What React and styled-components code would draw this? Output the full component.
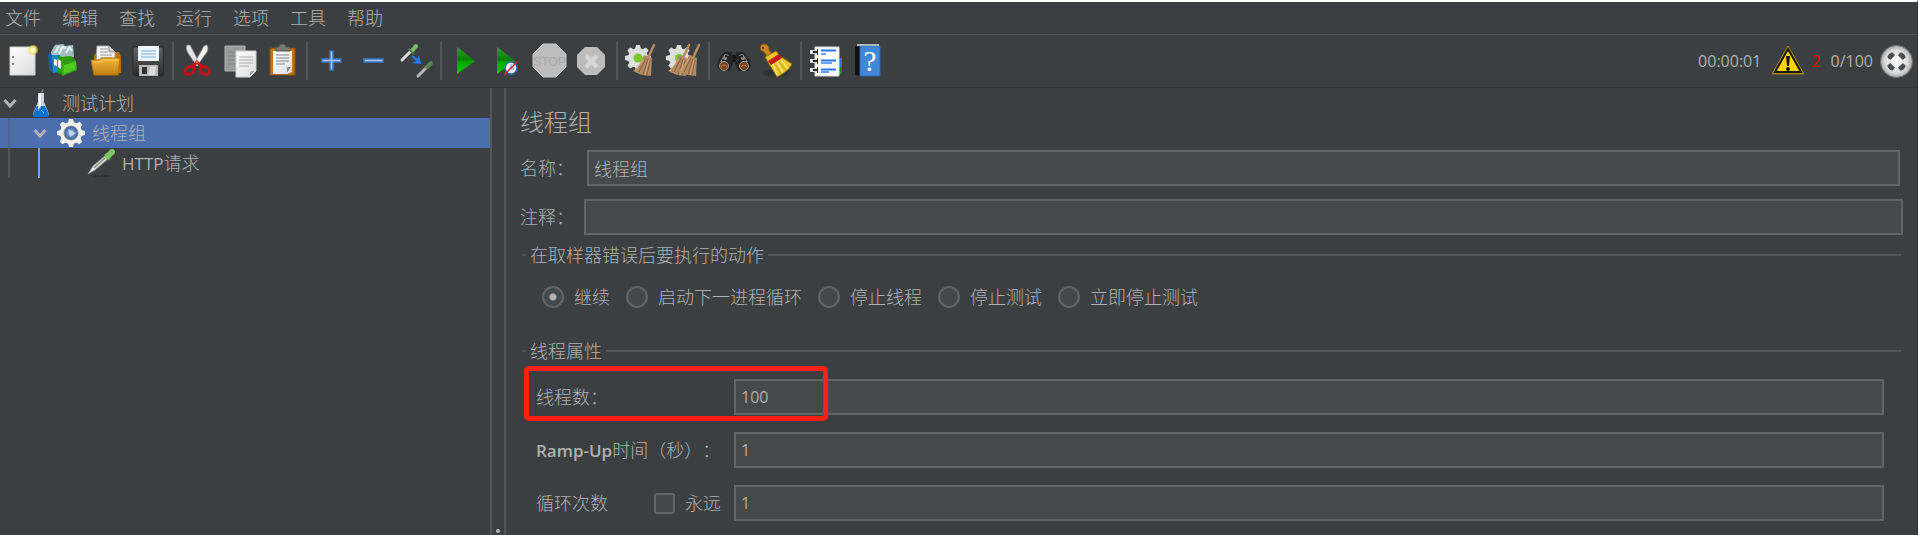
import React from "react";
import styled, { createGlobalStyle } from "styled-components";

const c = {
  bg: "#3c3f41",
  field: "#45494a",
  border: "#646464",
  line: "#555555",
  text: "#b0b0b0",
  select: "#4b6eaf",
};

const GlobalStyle = createGlobalStyle`
  *, *::before, *::after { box-sizing: border-box; }
  body {
    margin: 0;
    background: ${c.bg};
    color: ${c.text};
    font-family: "Open Sans", "Noto Sans CJK SC", sans-serif;
    font-size: 18px;
    font-weight: 300;
    line-height: 24px;
    text-spacing-trim: space-all;
  }
  button, input { font: inherit; color: inherit; }
`;

const Window = styled.div`
  display: flex;
  flex-direction: column;
  height: 100vh;
  overflow: hidden;
  border-top: 2px solid #ffffff;
  border-right: 1px solid #2d2f30;
`;

const MenuBar = styled.nav`
  display: flex;
  flex: none;
  gap: 21px;
  height: 33px;
  padding: 4px 5px;
  border-bottom: 1px solid ${c.line};
`;

const MenuButton = styled.button`
  padding: 0;
  border: 0;
  background: none;
  white-space: nowrap;
`;

const ToolBar = styled.header`
  display: flex;
  flex: none;
  align-items: center;
  height: 53px;
  padding: 0 4px 0 1px;
  border-bottom: 1px solid #323537;
`;

const ToolButton = styled.button`
  display: grid;
  place-items: center;
  flex: none;
  width: 42px;
  height: 42px;
  padding: 0;
  border: 0;
  background: none;
`;

const Separator = styled.span`
  flex: none;
  width: 2px;
  height: 38px;
  margin: 0 3px;
  background: ${c.line};
`;

const Status = styled.div`
  display: flex;
  align-items: center;
  gap: 10px;
  margin-left: auto;
  font-size: 16px;
  font-weight: 400;
`;

const ErrorGroup = styled.span`
  display: flex;
  align-items: center;
  gap: 6px;
  color: #e00000;
`;

const ThreadGroup = styled.span`
  display: flex;
  align-items: center;
  gap: 7px;
`;

const Body = styled.div`
  display: flex;
  flex: 1;
  min-height: 0;
`;

const Tree = styled.aside`
  flex: none;
  width: 490px;
`;

const TreeRow = styled.div`
  display: flex;
  height: 30px;
  line-height: 30px;
  background: ${(p) => (p.$selected ? c.select : "transparent")};
`;

const Guide = styled.span`
  width: 30px;
  background: linear-gradient(${(p) => p.$color}, ${(p) => p.$color}) 8px 0 / 2px 100% no-repeat;
`;

const Toggle = styled.span`
  display: grid;
  place-items: center;
  width: 20px;
`;

const NodeIcon = styled.span`
  display: grid;
  place-items: center;
  width: 42px;
`;

const Latin = styled.span`
  font-size: 17px;
  font-weight: ${(p) => (p.$bold ? 600 : 400)};
`;

const Divider = styled.div`
  display: flex;
  flex: none;
  align-items: flex-end;
  justify-content: center;
  width: 16px;
  border: solid ${c.line};
  border-width: 0 2px;
`;

const Grip = styled.span`
  width: 4px;
  height: 4px;
  margin-bottom: 2px;
  border-radius: 2px;
  background: #b8b8b8;
`;

const Main = styled.main`
  flex: 1;
  min-width: 0;
  padding: 18px 14px 0 14px;
`;

const Title = styled.h1`
  margin: 0 0 12px;
  font-size: 24px;
  font-weight: 300;
  line-height: 32px;
`;

const HeadRow = styled.div`
  display: flex;
  align-items: center;
  gap: 10px;
  margin-bottom: ${(p) => (p.$inset ? 13 : 8)}px;
  padding: ${(p) => (p.$inset ? "0 3px 0 0" : "0")};

  label { flex: none; width: ${(p) => (p.$inset ? 57 : 54)}px; }
`;

const TextInput = styled.input`
  flex: 1;
  min-width: 0;
  width: 100%;
  height: 36px;
  padding: 0 5px;
  border: 2px solid ${c.border};
  border-radius: 0;
  outline: 0;
  background: ${c.field};
  font-weight: ${(p) => (p.$numeric ? 400 : 300)};
  font-size: ${(p) => (p.$numeric ? 16 : 18)}px;
`;

const Group = styled.fieldset`
  min-width: 0;
  margin: 0 2px;
  padding: 0;
  border: 0;
  border-top: 2px solid ${c.line};
`;

const Legend = styled.legend`
  margin-left: 4px;
  padding: 0 4px;
`;

const Radios = styled.div`
  display: flex;
  gap: 16px;
  padding: 18px 20px 30px;
`;

const Choice = styled.label`
  display: flex;
  align-items: center;
  gap: 10px;
  white-space: nowrap;
`;

const Radio = styled.input`
  appearance: none;
  width: 22px;
  height: 22px;
  margin: 0;
  border: 2px solid ${c.border};
  border-radius: 50%;
  background: #43494a;
  &:checked { background: radial-gradient(circle, #b4b4b4 3px, #43494a 4px); }
`;

const Check = styled.input`
  appearance: none;
  width: 21px;
  height: 21px;
  margin: 0;
  border: 2px solid ${c.border};
  border-radius: 3px;
  background: #43494a;
`;

const Properties = styled.div`
  display: flex;
  flex-direction: column;
  gap: 17px;
  padding: 16px 17px 0 14px;
`;

const PropertyRow = styled.div`
  position: relative;
  display: grid;
  grid-template-columns: 198px 1fr;
  align-items: center;
`;

const PropertyLabel = styled.div`
  display: flex;
  justify-content: space-between;
  padding-right: 13px;
  white-space: nowrap;
`;

const Highlight = styled.span`
  position: absolute;
  inset: -13px auto -6px -12px;
  width: 304px;
  border: 5px solid #ff2012;
  border-radius: 5px;
  pointer-events: none;
`;

const Svg = ({ size = 36, box = 36, children }) => (
  <svg width={size} height={size} viewBox={`0 0 ${box} ${box}`} aria-hidden="true">{children}</svg>
);

const GradientSvg = styled.svg`
  position: absolute;
`;

const Gradients = () => (
  <GradientSvg width="0" height="0" aria-hidden="true">
    <defs>
      <linearGradient id="paper" x1="0" y1="0" x2="1" y2="1"><stop stopColor="#fff" /><stop offset="1" stopColor="#dcdcdc" /></linearGradient>
      <linearGradient id="gold" x1="0" y1="0" x2="0" y2="1"><stop stopColor="#f0b838" /><stop offset="1" stopColor="#c08010" /></linearGradient>
      <linearGradient id="green" x1="0" y1="0" x2="0" y2="1"><stop stopColor="#34a034" /><stop offset=".48" stopColor="#087e08" /><stop offset=".55" stopColor="#00a800" /><stop offset="1" stopColor="#12c512" /></linearGradient>
      <linearGradient id="steel" x1="0" y1="0" x2="0" y2="1"><stop stopColor="#666" /><stop offset="1" stopColor="#2a2a2a" /></linearGradient>
      <radialGradient id="silver"><stop stopColor="#fff" /><stop offset=".7" stopColor="#dcdcdc" /><stop offset="1" stopColor="#a8a8a8" /></radialGradient>
      <radialGradient id="glow"><stop stopColor="#fffef0" /><stop offset=".45" stopColor="#fdf5a0" /><stop offset="1" stopColor="#e8d838" stopOpacity=".5" /></radialGradient>
      <radialGradient id="blue"><stop stopColor="#a9c6e6" /><stop offset="1" stopColor="#2c5794" /></radialGradient>
    </defs>
  </GradientSvg>
);

const NewIcon = () => (
  <Svg>
    <path d="M6 4h25v28H6z" fill="url(#paper)" stroke="#d0d0c8" />
    <path d="M9 13v2M9 20v2" stroke="#888" strokeWidth="2" />
    <circle cx="29" cy="7" r="5" fill="url(#glow)" />
  </Svg>
);

const TemplatesIcon = () => (
  <Svg>
    <path d="M5 9l4-7 8-1 2 2 8-1 1 12-22 3z" fill="#a3bdc5" />
    <path d="M9 10l4-7M13 11l4-8M20 10l4-7M16 4l4 1M24 5l2 3" stroke="#e8f3f6" strokeWidth="2" fill="none" />
    <path d="M2 10l4 2 1 18-4-3z" fill="#0b62a6" />
    <path d="M6 12l8 0 0 17-7 1z" fill="#168bdc" />
    <path d="M8 16l3 1v6l-3-1z" fill="#f3faff" />
    <path d="M11 12l5 2v18l-4-2z" fill="#239c15" />
    <path d="M16 14l9-1 5 5 1 9-15 6z" fill="#38b015" />
    <path d="M12 16l3 2v8l-3-2z" fill="#f0ffe9" />
    <path d="M18 22l12-3-1 7-11 5z" fill="#52cc22" />
    <path d="M16 14l9-1 5 5-12 4z" fill="#2d9813" />
  </Svg>
);

const OpenIcon = () => (
  <Svg>
    <path d="M6 12l3-3h22l2 5v16H7z" fill="#b97505" />
    <path d="M9 3l12 0 6 6v12H8z" fill="#f3f3f3" stroke="#aaa" />
    <path d="M21 3v6h6" fill="#ccc" stroke="#999" />
    <path d="M12 6h8M12 9h8M12 12h12M12 15h12" stroke="#999" />
    <path d="M3 17h8l3-2h18l-2 17H6z" fill="url(#gold)" stroke="#b47007" />
    <path d="M5 19h7l3-2h15" stroke="#f8ce5c" fill="none" />
  </Svg>
);

const SaveIcon = () => (
  <Svg>
    <path d="M3 4h30l1 27-2 2H5l-2-2z" fill="url(#steel)" stroke="#292929" />
    <path d="M8 3h21v15H8z" fill="#edf6fd" />
    <path d="M11 8h15M11 11h15M11 14h15" stroke="#77acd8" />
    <path d="M9 22h19v11H9z" fill="#b8b8b8" />
    <path d="M12 24h5v7h-5z" fill="#333" />
    <path d="M20 24l6-1-1 9h-7z" fill="#ddd" />
  </Svg>
);

const CutIcon = () => (
  <Svg>
    <path d="M7 2c-2 4 1 8 3 11l7 10 3-2L10 2z" fill="#e4e5e1" stroke="#8b8b87" strokeWidth=".7" />
    <path d="M27 2c2 4 0 8-3 11l-7 10-3-2L24 3z" fill="#f4f4f2" stroke="#92928e" strokeWidth=".7" />
    <g fill="none" stroke="#ca0c12" strokeWidth="3">
      <ellipse cx="9.5" cy="27.500" rx="3.500" ry="5" transform="rotate(55 9.5 27.5)" />
      <ellipse cx="24.5" cy="27.500" rx="3.500" ry="5" transform="rotate(-55 24.5 27.5)" />
      <path d="M12 24l5-5 5 5" />
    </g>
    <circle cx="17" cy="19" r="1.5" fill="#f55" />
  </Svg>
);

const CopyIcon = () => (
  <Svg>
    <path d="M3 3h20v25H3z" fill="#9a9c9c" stroke="#b0b0b0" />
    <path d="M6 9h14M6 13h14M6 17h14M6 21h10" stroke="#808080" />
    <path d="M14 8h20v20l-6 6H14z" fill="url(#paper)" stroke="#d0d0d0" />
    <path d="M17 14h14M17 17h14M17 20h14M17 23h10" stroke="#aaa" />
    <path d="M34 27l-7 7 1-6z" fill="#999" stroke="#eee" />
  </Svg>
);

const PasteIcon = () => (
  <Svg>
    <path d="M6 5h25v27H6z" fill="#bc7517" stroke="#83500f" />
    <path d="M9 8h19v21l-5 2H9z" fill="url(#paper)" />
    <path d="M12 12h13M12 15h13M12 18h13M12 21h9" stroke="#888" />
    <path d="M28 23l-5 8-1-7z" fill="#888" stroke="#eee" />
    <path d="M12 4h3c0-4 7-4 7 0h4v4H12z" fill="#777b70" stroke="#51554d" />
  </Svg>
);

const PlusIcon = () => (
  <Svg>
    <path d="M16 8h3v8h8v3h-8v8h-3v-8h-8v-3h8z" fill="#a6c6ea" stroke="#3a79c4" strokeWidth="1.500" />
  </Svg>
);

const MinusIcon = () => (
  <Svg><path d="M8 16h19v3h-19z" fill="#a6c6ea" stroke="#3a79c4" strokeWidth="1.500" /></Svg>
);

const SwapIcon = () => (
  <Svg>
    <g strokeLinecap="round">
      <path d="M4 17L14 7" stroke="#dedbd8" strokeWidth="3" />
      <path d="M14 8l4-5" stroke="#80bc64" strokeWidth="4" />
      <path d="M11 6l5 5" stroke="#517642" strokeWidth="1.500" />
      <path d="M20 33l9-9" stroke="#b7b7b7" strokeWidth="3" />
      <path d="M29 24l4-4" stroke="#57864b" strokeWidth="4" />
    </g>
    <path d="M14 13l5 4" stroke="#2e7df0" strokeWidth="2" />
    <path d="M21 12l2 9-9-1 4-2z" fill="#2679f5" />
  </Svg>
);

const PlayIcon = () => (
  <Svg><path d="M9 4l18 14L9 31z" fill="url(#green)" /></Svg>
);

const PlayNoTimersIcon = () => (
  <Svg>
    <path d="M7 4l18 14L7 31z" fill="url(#green)" />
    <circle cx="21" cy="25" r="6" fill="#e9f0f8" stroke="#2c6db5" strokeWidth="1.500" />
    <path d="M21 21v5h3" stroke="#6aa0d0" fill="none" />
    <path d="M14 32l14-14" stroke="#d92020" strokeWidth="1.500" />
  </Svg>
);

const StopIcon = () => (
  <Svg>
    <path d="M11 1h13l10 10v13L24 34H11L1 24V11z" fill="#bdbdbd" stroke="#c8c8c8" />
    <text x="17.500" y="23" textAnchor="middle" fontFamily="Liberation Sans" fontWeight="400" fontSize="12" fill="#aaaaaa">STOP</text>
  </Svg>
);

const ShutdownIcon = () => (
  <Svg>
    <path d="M11 4h12l8 8v12l-8 8H11l-8-8V12z" fill="#bdbdbd" />
    <path d="M12 13l11 11M23 13L12 24" stroke="#d8d8d8" strokeWidth="4" />
  </Svg>
);

const gearTeeth = [0, 45, 90, 135, 180, 225, 270, 315];

const Gear = ({ cx, cy, r, fill = "#dededc" }) => (
  <g transform={`translate(${cx} ${cy})`} fill={fill}>
    <circle r={r - 3} />
    {gearTeeth.map((a) => (
      <path key={a} d={`M-3 ${4 - r}L-2 ${-r}H2L3 ${4 - r}z`} transform={`rotate(${a})`} />
    ))}
  </g>
);

const Broom = ({ x = 0 }) => (
  <g transform={`translate(${x} 0)`}>
    <path d="M30 2l-6 13" stroke="#b58a62" strokeWidth="2.500" strokeLinecap="round" />
    <path d="M20 12l8 3-1 18-9-1-9-4c7-5 8-10 11-16z" fill="#b48b61" />
    <path d="M22 15l-7 14M24 16l-5 16M26 17l-3 15" stroke="#775235" strokeWidth=".8" />
    <path d="M20 16l-9 12M25 17l-4 15" stroke="#dbb88c" strokeWidth=".7" />
  </g>
);

const ClearIcon = () => (
  <Svg><Gear cx={14} cy={15} r={13} /><circle cx="14" cy="15" r="4.500" fill="#77ca28" /><Broom /></Svg>
);

const ClearAllIcon = () => (
  <Svg><Gear cx={13} cy={15} r={13} /><circle cx="13" cy="15" r="4" fill="#77ca28" /><Broom x={-7} /><Broom x={3} /></Svg>
);

const SearchIcon = () => (
  <Svg>
    <path d="M13 12h9v7h-9z" fill="#151515" />
    <path d="M8 9h8l1 12-3 7H4l-3-5 2-7z" fill="#242424" />
    <path d="M20 9h8l5 7 2 7-3 5H22l-3-7z" fill="#242424" />
    <path d="M9 11l4 1-4 7-5 0zM23 12l4-1 5 8-5 0z" fill="#8e9090" />
    <path d="M9 13l4 1M6 17l4 1M23 14l4-1M26 18l4-1" stroke="#222" strokeWidth="2" />
    <g fill="#7a4020" stroke="#9c9c9c"><circle cx="8" cy="23" r="4.500" /><circle cx="28" cy="23" r="4.500" /></g>
    <path d="M5 24q3-4 6 0M25 24q3-4 6 0" stroke="#c87a4c" fill="none" />
  </Svg>
);

const SweepIcon = () => (
  <Svg>
    <ellipse cx="19" cy="30" rx="14" ry="4" fill="#282b2c" opacity=".6" />
    <path d="M3 2c5-3 9 1 8 5l4 5-5 4-4-7C3 9 1 5 3 2z" fill="#c98425" stroke="#765018" />
    <circle cx="5" cy="5" r="1" fill="#533816" />
    <path d="M7 14l11-6 4 5 12 8c-3 6-9 10-15 13C16 28 11 22 10 19z" fill="#eac525" stroke="#8c7112" />
    <path d="M10 18l11-7 3 4-11 7z" fill="#c41617" />
    <path d="M15 21l4 11M19 19l6 10M23 17l7 9" stroke="#f8e478" strokeWidth="1.500" />
    <path d="M17 21l6 10M21 19l7 9" stroke="#c0a020" />
  </Svg>
);

const HelperIcon = () => (
  <Svg>
    <path d="M28 15h6v9h-6z" fill="#1977e7" /><path d="M28 24h6v7h-6z" fill="#079307" />
    <path d="M7 4h24v29H7z" fill="#fff" stroke="#d8d8d8" />
    <path d="M13 7.500h15M13 17.500h15M13 26.500h15" stroke="#2476e9" strokeWidth="2" />
    <path d="M13 11h5M13 20h11M13 29h8" stroke="#3683ee" strokeWidth="1.500" />
    <path d="M2 9h7M2 18h7M2 27h7" stroke="#ddd" strokeWidth="4" />
    <path d="M5 9h4M5 18h4M5 27h4" stroke="#292929" strokeWidth="2" />
    <path d="M9.500 6v6M9.500 15v6M9.500 24v6" stroke="#292929" />
  </Svg>
);

const HelpIcon = () => (
  <Svg>
    <path d="M5 3h7v30l-7-1z" fill="#111" />
    <path d="M10 3h20v30H10z" fill="#4288d8" stroke="#2b69ae" />
    <path d="M7 2h22" stroke="#d5dce1" strokeWidth="1.500" />
    <text x="20" y="28" textAnchor="middle" fontFamily="Liberation Serif" fontWeight="400" fontSize="29" fill="#fff">?</text>
  </Svg>
);

const WarningIcon = () => (
  <Svg size={34} box={34}>
    <path d="M17 2L33 30H1z" fill="#b29200" stroke="#a48600" strokeLinejoin="round" />
    <path d="M17 5L30 28H4z" fill="#ffd400" stroke="#171717" strokeWidth="2" />
    <path d="M15 12h4l-1 10h-2z" fill="#171717" /><circle cx="17" cy="25" r="2" fill="#171717" />
  </Svg>
);

const ThreadsIcon = () => (
  <Svg size={33} box={33}>
    <circle cx="16.500" cy="16.500" r="16" fill="url(#silver)" stroke="#707070" />
    {[45, 135, 225, 315].map((a) => (
      <path key={a} d="M13 7q3.500-2 7 0v4h-7z" fill="#4b4d4e" transform={`rotate(${a} 16.500 16.500)`} />
    ))}
  </Svg>
);

const Chevron = () => (
  <Svg size={14} box={14}><path d="M1.500 4L7 10l5.500-6" fill="none" stroke="#b4b4b4" strokeWidth="3" /></Svg>
);

const FlaskIcon = () => (
  <Svg size={28} box={28}>
    <path d="M16 0l-2 5" stroke="#777" strokeWidth="1.500" />
    <path d="M11 4h6v9l5 12q0 3-3 3H9q-3 0-3-3l5-12z" fill="#c8d4de" />
    <path d="M10 17h8l4 9q0 2-3 2H9q-3 0-3-2z" fill="#0872cf" />
    <path d="M12 5h2v12l-3 4z" fill="#f4f8fa" />
    <path d="M11 22l3-4M17 24l-3-3" stroke="#52baff" />
  </Svg>
);

const GearIcon = () => (
  <Svg size={28} box={28}>
    <Gear cx={14} cy={14} r={14} fill="#f0f0ec" />
    <circle cx="14" cy="14" r="7" fill="url(#blue)" stroke="#8a9098" />
    <path d="M11 10l8 4-6 4z" fill="#d7e8f9" opacity=".7" />
  </Svg>
);

const SamplerIcon = () => (
  <Svg size={28} box={28}>
    <ellipse cx="15" cy="27" rx="9" ry="1" fill="#2e3132" />
    <path d="M1 25l5-8L19 6l3 3L8 21z" fill="#eee" stroke="#929292" />
    <path d="M7 19L18 9" stroke="#8ba287" strokeWidth="2" />
    <path d="M18 5l5 6" stroke="#4d8b3c" strokeWidth="3" />
    <path d="M21 7l4-4" stroke="#81c565" strokeWidth="6" strokeLinecap="round" />
  </Svg>
);

const menus = ["文件", "编辑", "查找", "运行", "选项", "工具", "帮助"];

const toolGroups = [
  [["新建", NewIcon], ["模板", TemplatesIcon], ["打开", OpenIcon], ["保存", SaveIcon]],
  [["剪切", CutIcon], ["复制", CopyIcon], ["粘贴", PasteIcon]],
  [["展开", PlusIcon], ["折叠", MinusIcon], ["切换", SwapIcon]],
  [["启动", PlayIcon], ["不停顿启动", PlayNoTimersIcon], ["停止", StopIcon], ["关闭", ShutdownIcon]],
  [["清除", ClearIcon], ["清除全部", ClearAllIcon]],
  [["查找", SearchIcon], ["重置查找", SweepIcon]],
  [["函数助手", HelperIcon], ["帮助", HelpIcon]],
];

const actions = ["继续", "启动下一进程循环", "停止线程", "停止测试", "立即停止测试"];

export default function App() {
  return (
    <Window>
      <GlobalStyle />
      <Gradients />
      <MenuBar>{menus.map((m) => <MenuButton key={m}>{m}</MenuButton>)}</MenuBar>
      <ToolBar>
        {toolGroups.map((group, i) => (
          <React.Fragment key={i}>
            {i > 0 && <Separator />}
            {group.map(([name, Icon]) => <ToolButton key={name} aria-label={name}><Icon /></ToolButton>)}
          </React.Fragment>
        ))}
        <Status>
          <span>00:00:01</span>
          <ErrorGroup><WarningIcon />2</ErrorGroup>
          <ThreadGroup>0/100<ThreadsIcon /></ThreadGroup>
        </Status>
      </ToolBar>
      <Body>
        <Tree>
          <TreeRow>
            <Toggle><Chevron /></Toggle>
            <NodeIcon><FlaskIcon /></NodeIcon>
            <span>测试计划</span>
          </TreeRow>
          <TreeRow $selected>
            <Guide $color="#566475" />
            <Toggle><Chevron /></Toggle>
            <NodeIcon><GearIcon /></NodeIcon>
            <span>线程组</span>
          </TreeRow>
          <TreeRow>
            <Guide $color="#555555" />
            <Guide $color="#6fa8dc" />
            <Toggle />
            <NodeIcon><SamplerIcon /></NodeIcon>
            <span><Latin>HTTP</Latin>请求</span>
          </TreeRow>
        </Tree>
        <Divider><Grip /></Divider>
        <Main>
          <Title>线程组</Title>
          <HeadRow $inset>
            <label htmlFor="name">名称：</label>
            <TextInput id="name" defaultValue="线程组" />
          </HeadRow>
          <HeadRow>
            <label htmlFor="comment">注释：</label>
            <TextInput id="comment" />
          </HeadRow>
          <Group>
            <Legend>在取样器错误后要执行的动作</Legend>
            <Radios>
              {actions.map((a, i) => (
                <Choice key={a}><Radio type="radio" name="action" defaultChecked={i === 0} />{a}</Choice>
              ))}
            </Radios>
          </Group>
          <Group>
            <Legend>线程属性</Legend>
            <Properties>
              <PropertyRow>
                <PropertyLabel><label htmlFor="threads">线程数：</label></PropertyLabel>
                <TextInput id="threads" $numeric defaultValue="100" />
                <Highlight />
              </PropertyRow>
              <PropertyRow>
                <PropertyLabel><label htmlFor="ramp"><Latin $bold>Ramp-Up</Latin>时间（秒）：</label></PropertyLabel>
                <TextInput id="ramp" $numeric defaultValue="1" />
              </PropertyRow>
              <PropertyRow>
                <PropertyLabel>
                  <label htmlFor="loops">循环次数</label>
                  <Choice><Check type="checkbox" />永远</Choice>
                </PropertyLabel>
                <TextInput id="loops" $numeric defaultValue="1" />
              </PropertyRow>
            </Properties>
          </Group>
        </Main>
      </Body>
    </Window>
  );
}
